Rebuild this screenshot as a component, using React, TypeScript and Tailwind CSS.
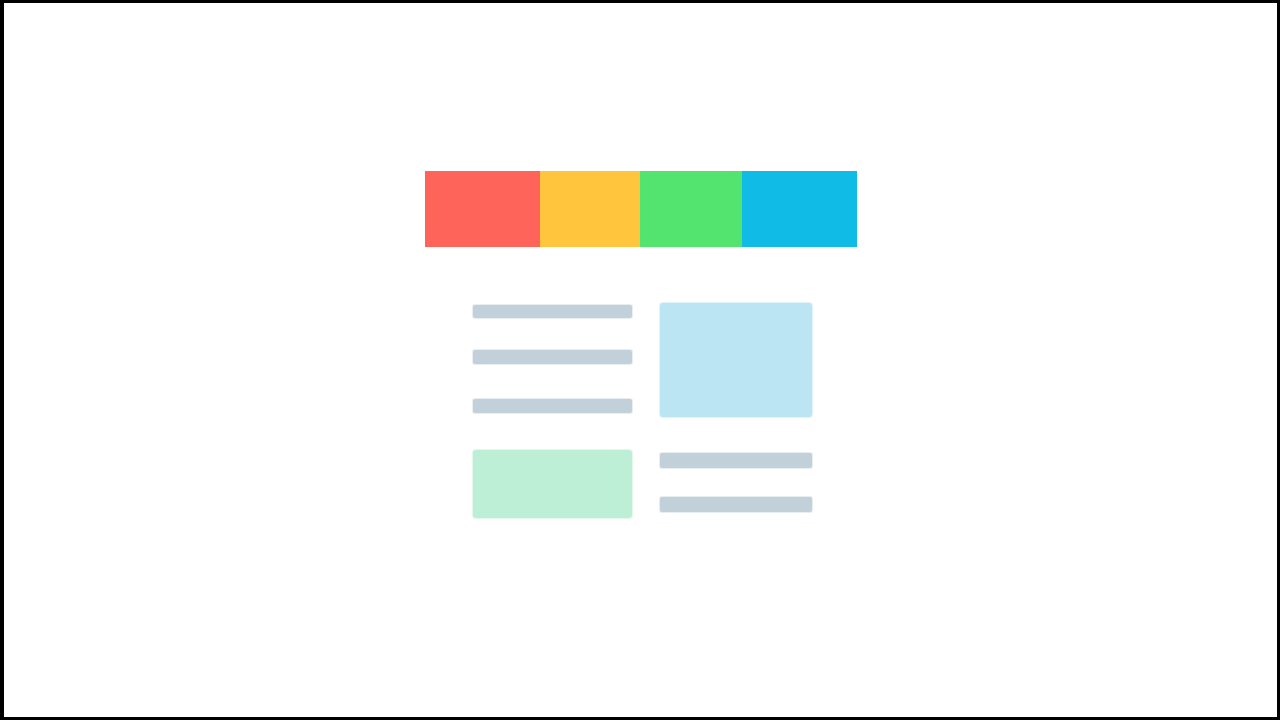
export default function App() {
  return (
    <div className="w-[1280px] h-[720px] bg-white border-[3px] border-l-4 border-black box-border overflow-hidden">
      <div className="ml-[421px] mt-[168px] w-[432px]">
        <div className="flex h-[76px]">
          <div className="w-[115px] bg-[#ff645a]" />
          <div className="w-[100px] bg-[#ffc53d]" />
          <div className="w-[102px] bg-[#53e46f]" />
          <div className="w-[115px] bg-[#10bbe6]" />
        </div>
        <div className="flex ml-[48px] gap-[28px]">
          <div className="w-[159px] flex flex-col mt-[58px]">
            <div className="h-[13px] rounded-[2px] bg-[#c2d0da] ring-1 ring-[#e8eef2]" />
            <div className="h-[14px] mt-[32px] rounded-[2px] bg-[#c2d0da] ring-1 ring-[#e8eef2]" />
            <div className="h-[14px] mt-[35px] rounded-[2px] bg-[#c2d0da] ring-1 ring-[#e8eef2]" />
            <div className="h-[68px] mt-[37px] rounded-[3px] bg-[#bdefd7] ring-1 ring-[#e4f8ee]" />
          </div>
          <div className="w-[152px] flex flex-col mt-[56px]">
            <div className="h-[114px] rounded-[3px] bg-[#bce5f4] ring-1 ring-[#e2f4fb]" />
            <div className="h-[15px] mt-[36px] rounded-[2px] bg-[#c2d0da] ring-1 ring-[#e8eef2]" />
            <div className="h-[15px] mt-[29px] rounded-[2px] bg-[#c2d0da] ring-1 ring-[#e8eef2]" />
          </div>
        </div>
      </div>
    </div>
  );
}
